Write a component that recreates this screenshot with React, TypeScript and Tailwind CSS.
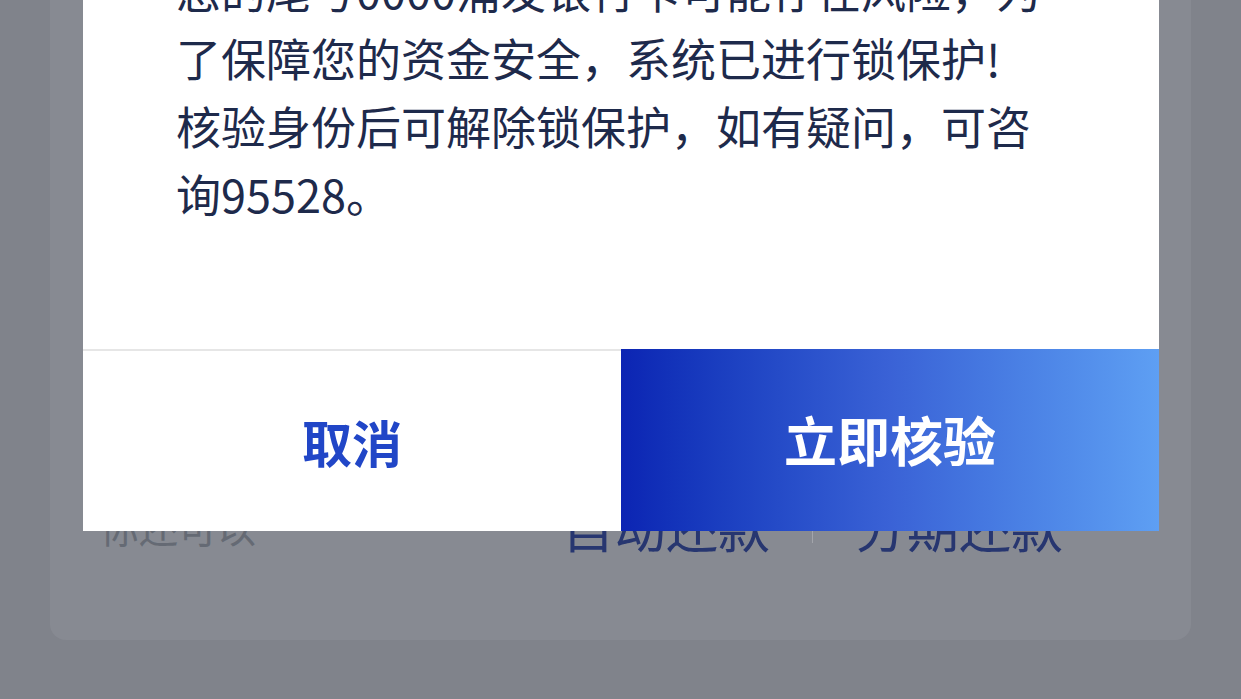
import React from 'react';

const font = { fontFamily: '"Noto Sans CJK SC", "Noto Sans", sans-serif' };

export default function App() {
  const lines1 = ['您的尾号0000浦发银行卡可能存在风险，为', '了保障您的资金安全，系统已进行锁保护!'];
  const lines2 = ['核验身份后可解除锁保护，如有疑问，可咨', '询95528。'];

  return (
    <div
      className="relative w-full h-[699px] overflow-hidden bg-[#80838b] flex flex-col"
      style={font}
    >
      {/* page content behind the mask */}
      <div className="flex-1 mx-[50px] mb-[59px] rounded-b-2xl bg-[#878a92] flex items-end">
        <div className="w-full flex items-center justify-between pl-[50px] pr-[128px] pb-[88px]">
          <span className="text-[39px] text-[#656a74] leading-none">你还可以</span>
          <div className="flex items-center gap-[42px]">
            <span className="text-[52px] text-[#273670] leading-none">自动还款</span>
            <span className="w-px h-[34px] bg-[#a3a5ab]" />
            <span className="text-[52px] text-[#273670] leading-none">分期还款</span>
          </div>
        </div>
      </div>

      {/* dialog */}
      <div className="absolute left-[83px] top-0 w-[1076px] h-[531px] bg-white flex flex-col">
        <div className="mt-[-44px] px-[93px] text-[45px] leading-[68px] text-[#1e2a4b] whitespace-nowrap">
          {lines1.map((l) => (
            <div key={l}>{l}</div>
          ))}
          {lines2.map((l) => (
            <div key={l}>{l}</div>
          ))}
        </div>
        <div className="flex-1" />
        <div className="flex h-[182px]">
          <button className="flex-1 border-t-2 border-[#e6e6e6] bg-white flex items-center justify-center text-[50px] font-bold text-[#2146c7]">
            取消
          </button>
          <button className="flex-1 bg-linear-to-r from-[#0c24b3] via-[#3a62d6] to-[#5e9ff3] flex items-center justify-center text-[53px] font-bold text-white">
            立即核验
          </button>
        </div>
      </div>
    </div>
  );
}
